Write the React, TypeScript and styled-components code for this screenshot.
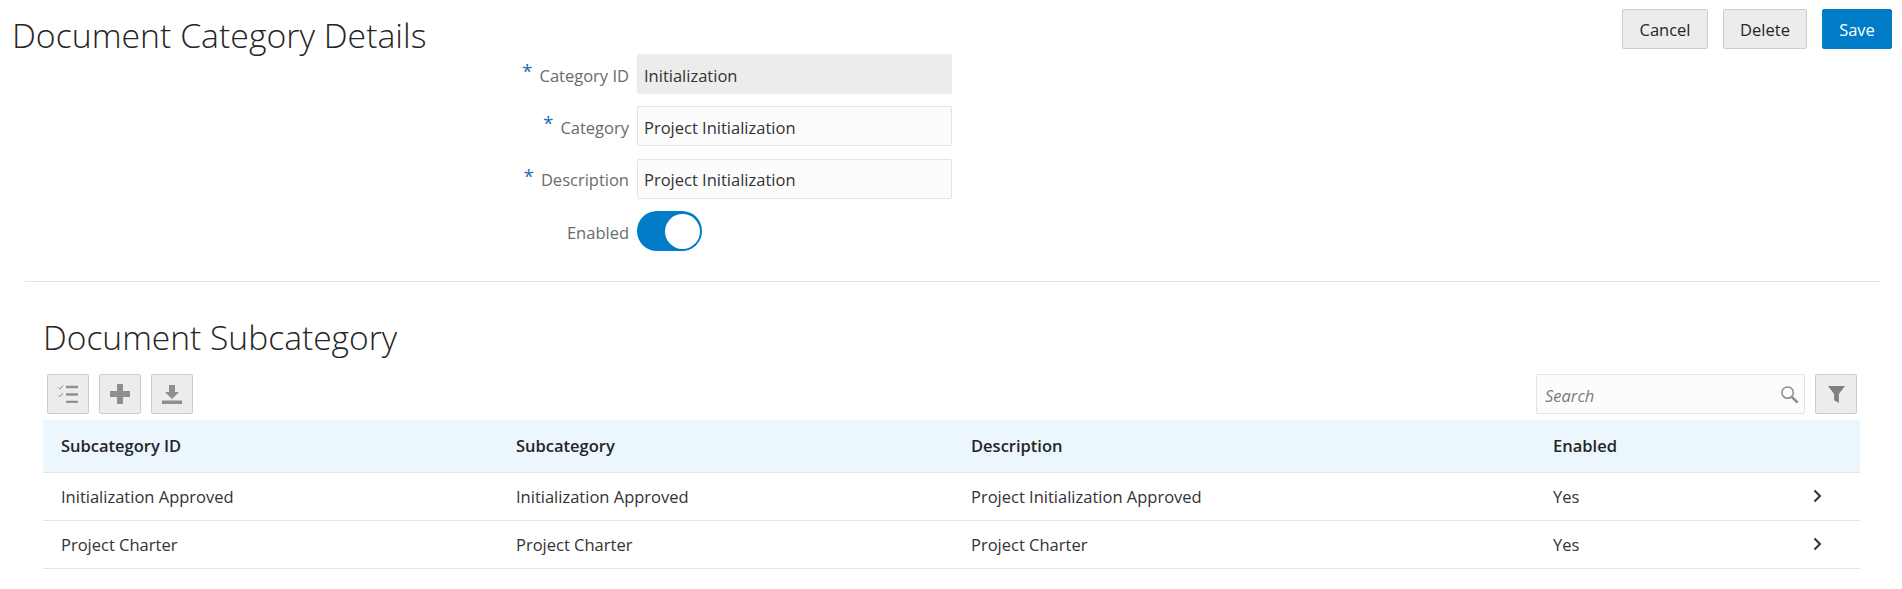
import React from "react"
import styled, { createGlobalStyle } from "styled-components"

const GlobalStyle = createGlobalStyle`
  html, body {
    margin: 0;
    padding: 0;
    background: #ffffff;
  }
  body {
    font-family: "Open Sans", "Liberation Sans", sans-serif;
    color: #333333;
  }
`

const Page = styled.div`
  width: 1902px;
  height: 589px;
  overflow: hidden;
`

const Top = styled.section`
  display: flex;
  align-items: flex-start;
  height: 281px;
`

const PageTitle = styled.h1`
  width: 429px;
  flex-shrink: 0;
  box-sizing: border-box;
  margin: 0;
  padding: 13px 0 0 12px;
  font-size: 33.8px;
  line-height: 44px;
  font-weight: 300;
  color: #252525;
  white-space: nowrap;
`

const Form = styled.div`
  display: grid;
  grid-template-columns: 200px 315px;
  column-gap: 8px;
  row-gap: 12.4px;
  margin-top: 54px;
`

const Label = styled.label`
  box-sizing: border-box;
  display: flex;
  justify-content: flex-end;
  align-items: center;
  gap: 7px;
  height: 40px;
  padding-top: 2px;
  font-size: 16.5px;
  color: #6b6b6b;
`

const Star = styled.span`
  color: #1a6fb5;
  font-size: 19px;
  line-height: 20px;
  position: relative;
  top: -4px;
`

const TextInput = styled.input<{ $disabled?: boolean }>`
  box-sizing: border-box;
  width: 315px;
  height: 40px;
  padding: 2px 6px 0;
  font: inherit;
  font-size: 16.5px;
  color: #333333;
  border-radius: 2px;
  border: 1px solid ${(p) => (p.$disabled ? "#ececec" : "#dfe4e8")};
  background: ${(p) => (p.$disabled ? "#ececec" : "#fcfcfc")};
  outline: none;
`

const Toggle = styled.div`
  box-sizing: border-box;
  width: 65px;
  height: 40px;
  padding: 2.5px 2px;
  border-radius: 20px;
  background: #007cc8;
  display: flex;
  justify-content: flex-end;
`

const Knob = styled.div`
  width: 35px;
  height: 35px;
  border-radius: 50%;
  background: #ffffff;
`

const Actions = styled.div`
  display: flex;
  gap: 15px;
  margin-left: auto;
  margin-right: 10px;
  margin-top: 9px;
`

const ActionButton = styled.button<{ $primary?: boolean; $w: number }>`
  box-sizing: border-box;
  width: ${(p) => p.$w}px;
  height: 40px;
  padding: 0;
  font: inherit;
  font-size: 16.5px;
  border-radius: 2px;
  border: 1px solid ${(p) => (p.$primary ? "#007cc8" : "#c4ced7")};
  background: ${(p) => (p.$primary ? "#007cc8" : "#ececec")};
  color: ${(p) => (p.$primary ? "#ffffff" : "#252525")};
`

const Divider = styled.hr`
  margin: 0 22px 0 25px;
  border: 0;
  border-top: 1px solid #dfe4e8;
`

const Section = styled.section`
  padding: 0 42px 0 43px;
`

const SectionTitle = styled.h2`
  margin: 0;
  padding: 33px 0 0 0;
  font-size: 33.6px;
  line-height: 44px;
  font-weight: 300;
  color: #252525;
`

const Toolbar = styled.div`
  display: flex;
  align-items: center;
  margin-top: 15px;
  height: 40px;
  padding: 0 3px 0 4px;
`

const IconButtons = styled.div`
  display: flex;
  gap: 10px;
`

const IconButton = styled.button`
  box-sizing: border-box;
  width: 42px;
  height: 40px;
  padding: 0;
  display: flex;
  align-items: center;
  justify-content: center;
  border-radius: 2px;
  border: 1px solid #c4ced7;
  background: #ececec;
`

const SearchBox = styled.div`
  box-sizing: border-box;
  width: 269px;
  height: 40px;
  margin-left: auto;
  margin-right: 10px;
  padding: 0 5px 0 8px;
  display: flex;
  align-items: center;
  border-radius: 2px;
  border: 1px solid #dfe4e8;
  background: #fcfcfc;
`

const SearchText = styled.span`
  flex: 1;
  padding-top: 2px;
  font-size: 16.5px;
  font-style: italic;
  color: #7a7a7a;
`

const Table = styled.table`
  width: 1817px;
  margin-top: 6px;
  border-collapse: collapse;
  table-layout: fixed;
`

const Th = styled.th<{ $w?: number }>`
  box-sizing: border-box;
  width: ${(p) => (p.$w ? `${p.$w}px` : "auto")};
  height: 52px;
  padding: 0 0 0 18px;
  text-align: left;
  font-size: 16.5px;
  font-weight: 600;
  color: #252525;
  background: #ebf6fd;
  border-bottom: 1px solid #dfe4e8;
`

const Td = styled.td`
  box-sizing: border-box;
  height: 48px;
  padding: 0 0 0 18px;
  font-size: 16.5px;
  color: #333333;
  border-bottom: 1px solid #dfe4e8;
`

const ChevronCell = styled(Td)`
  padding: 0 0 0 18px;

  svg {
    display: block;
  }
`

const rows = [
  { id: "Initialization Approved", name: "Initialization Approved", desc: "Project Initialization Approved", enabled: "Yes" },
  { id: "Project Charter", name: "Project Charter", desc: "Project Charter", enabled: "Yes" },
]

const fields = [
  { label: "Category ID", value: "Initialization", disabled: true },
  { label: "Category", value: "Project Initialization" },
  { label: "Description", value: "Project Initialization" },
]

const ChecklistIcon = () => (
  <svg width="20" height="18" viewBox="0 0 20 18" fill="none">
    <path d="M0.5 2.5l1.5 1.5L5 0.5M0.5 10l1.5 1.5L5 8" stroke="#8f8f8f" strokeWidth="1" />
    <path d="M8 2h12M8 9.5h12M8 17h12" stroke="#8f8f8f" strokeWidth="2.4" />
  </svg>
)

const PlusIcon = () => (
  <svg width="20" height="20" viewBox="0 0 20 20">
    <path d="M7 0h6v7h7v6h-7v7H7v-7H0V7h7z" fill="#8f8f8f" />
  </svg>
)

const DownloadIcon = () => (
  <svg width="20" height="19" viewBox="0 0 20 19">
    <path d="M7 0h6v7h4l-7 7-7-7h4z" fill="#8f8f8f" />
    <path d="M0 15.5h20V19H0z" fill="#8f8f8f" />
  </svg>
)

const FilterIcon = () => (
  <svg width="17" height="17" viewBox="0 0 18 18">
    <path d="M0 0h18l-6.5 8.5V18l-5-3V8.5z" fill="#808080" />
  </svg>
)

const SearchIcon = () => (
  <svg width="19" height="19" viewBox="0 0 20 20" fill="none">
    <circle cx="8" cy="8" r="6" stroke="#8c8c8c" strokeWidth="1.6" />
    <path d="M12.5 12.5l6 6" stroke="#8c8c8c" strokeWidth="2.8" />
  </svg>
)

const ChevronIcon = () => (
  <svg width="9" height="14" viewBox="0 0 9 14" fill="none">
    <path d="M1.5 1.5L7 7l-5.5 5.5" stroke="#333333" strokeWidth="2" />
  </svg>
)

export default function App() {
  return (
    <Page>
      <GlobalStyle />
      <Top>
        <PageTitle>Document Category Details</PageTitle>
        <Form>
          {fields.map((f) => (
            <React.Fragment key={f.label}>
              <Label>
                <Star>*</Star>
                {f.label}
              </Label>
              <TextInput defaultValue={f.value} $disabled={f.disabled} readOnly />
            </React.Fragment>
          ))}
          <Label>Enabled</Label>
          <Toggle>
            <Knob />
          </Toggle>
        </Form>
        <Actions>
          <ActionButton $w={86}>Cancel</ActionButton>
          <ActionButton $w={84}>Delete</ActionButton>
          <ActionButton $w={70} $primary>
            Save
          </ActionButton>
        </Actions>
      </Top>
      <Divider />
      <Section>
        <SectionTitle>Document Subcategory</SectionTitle>
        <Toolbar>
          <IconButtons>
            <IconButton>
              <ChecklistIcon />
            </IconButton>
            <IconButton>
              <PlusIcon />
            </IconButton>
            <IconButton>
              <DownloadIcon />
            </IconButton>
          </IconButtons>
          <SearchBox>
            <SearchText>Search</SearchText>
            <SearchIcon />
          </SearchBox>
          <IconButton>
            <FilterIcon />
          </IconButton>
        </Toolbar>
        <Table>
          <thead>
            <tr>
              <Th $w={455}>Subcategory ID</Th>
              <Th $w={455}>Subcategory</Th>
              <Th $w={582}>Description</Th>
              <Th $w={260}>Enabled</Th>
              <Th />
            </tr>
          </thead>
          <tbody>
            {rows.map((r) => (
              <tr key={r.id}>
                <Td>{r.id}</Td>
                <Td>{r.name}</Td>
                <Td>{r.desc}</Td>
                <Td>{r.enabled}</Td>
                <ChevronCell>
                  <ChevronIcon />
                </ChevronCell>
              </tr>
            ))}
          </tbody>
        </Table>
      </Section>
    </Page>
  )
}
